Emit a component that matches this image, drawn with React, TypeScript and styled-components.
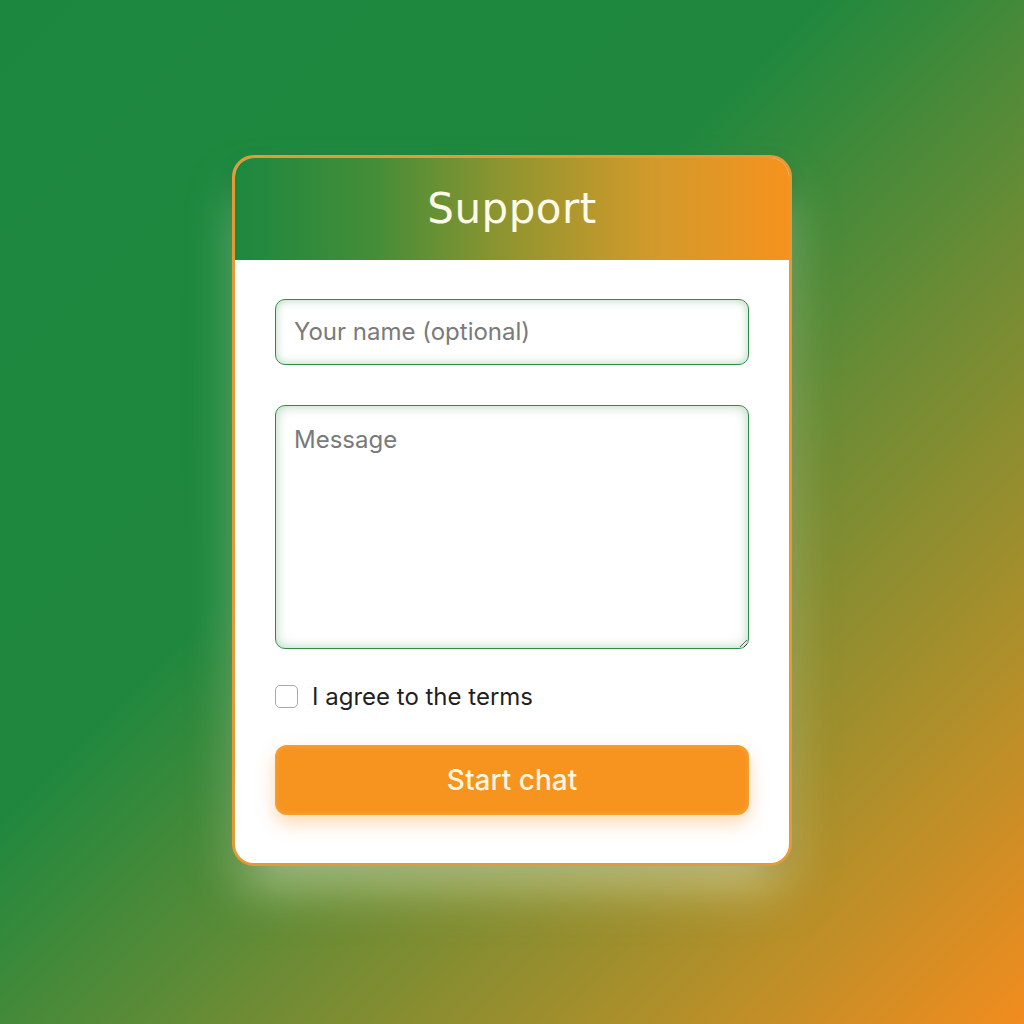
import React from "react";
import styled, { createGlobalStyle } from "styled-components";

const GlobalStyle = createGlobalStyle`
  html, body {
    margin: 0;
    padding: 0;
  }
  body {
    font-family: Inter, "Noto Sans", sans-serif;
  }
`;

const Page = styled.div`
  box-sizing: border-box;
  width: 100%;
  height: 1024px;
  padding-bottom: 4px;
  display: flex;
  align-items: center;
  justify-content: center;
  background: linear-gradient(135deg, #1c883f 0%, #1f883e 40%, #6f8c34 62%, #b18f2a 82%, #f28c1e 100%);
`;

const Card = styled.div`
  position: relative;
  width: 554px;
  border: 3px solid #e39b37;
  border-radius: 22px;
  background: #ffffff;
  overflow: hidden;
  box-shadow: 0 30px 50px -10px rgba(230, 240, 200, 0.55), 0 6px 18px rgba(0, 0, 0, 0.12);
`;

const Header = styled.div`
  height: 102px;
  display: flex;
  align-items: center;
  justify-content: center;
  background: linear-gradient(90deg, #1c883f 0%, #448d38 25%, #93952f 50%, #d19a2b 75%, #f6921e 100%);
`;

const Title = styled.h1`
  margin: 0;
  font-family: "DejaVu Sans", sans-serif;
  font-weight: 400;
  font-size: 42px;
  letter-spacing: 0.5px;
  color: #fdfbe8;
`;

const Body = styled.form`
  display: flex;
  flex-direction: column;
  padding: 39px 40px 48px;
`;

const NameInput = styled.input`
  box-sizing: border-box;
  width: 100%;
  height: 66px;
  padding: 0 18px;
  border: 1.5px solid #2f8c47;
  border-radius: 10px;
  box-shadow: inset 0 0 10px rgba(60, 150, 80, 0.4);
  font-family: Inter, "Noto Sans", sans-serif;
  font-size: 24px;
  color: #333;
  outline: none;
  &::placeholder {
    color: #7a7a7a;
  }
`;

const MessageInput = styled.textarea`
  box-sizing: border-box;
  width: 100%;
  height: 244px;
  margin-top: 40px;
  padding: 19px 18px;
  border: 1.5px solid #2f8c47;
  border-radius: 10px;
  box-shadow: inset 0 0 12px rgba(60, 150, 80, 0.4);
  font-family: Inter, "Noto Sans", sans-serif;
  font-size: 24px;
  color: #333;
  outline: none;
  resize: vertical;
  &::placeholder {
    color: #7a7a7a;
  }
`;

const CheckRow = styled.label`
  display: flex;
  align-items: center;
  gap: 14px;
  height: 24px;
  margin-top: 36px;
  font-family: Inter, "Noto Sans", sans-serif;
  font-size: 24px;
  line-height: 24px;
  color: #1f1f1f;
`;

const Box = styled.span`
  box-sizing: border-box;
  width: 23px;
  height: 23px;
  border: 1.5px solid #a8a8a8;
  border-radius: 5px;
  background: #fff;
`;

const StartButton = styled.button`
  height: 70px;
  margin-top: 36px;
  border: none;
  border-radius: 12px;
  background: #f7931f;
  box-shadow: 0 8px 18px rgba(247, 147, 31, 0.35), inset 0 0 6px rgba(255, 200, 120, 0.4);
  font-family: Inter, "Noto Sans", sans-serif;
  font-size: 28px;
  font-weight: 500;
  color: #fff6dd;
  cursor: pointer;
`;

export default function App() {
  return (
    <>
      <GlobalStyle />
      <Page>
        <Card>
          <Header>
            <Title>Support</Title>
          </Header>
          <Body onSubmit={(e) => e.preventDefault()}>
            <NameInput placeholder="Your name (optional)" />
            <MessageInput placeholder="Message" />
            <CheckRow>
              <Box />
              I agree to the terms
            </CheckRow>
            <StartButton type="submit">Start chat</StartButton>
          </Body>
        </Card>
      </Page>
    </>
  );
}
